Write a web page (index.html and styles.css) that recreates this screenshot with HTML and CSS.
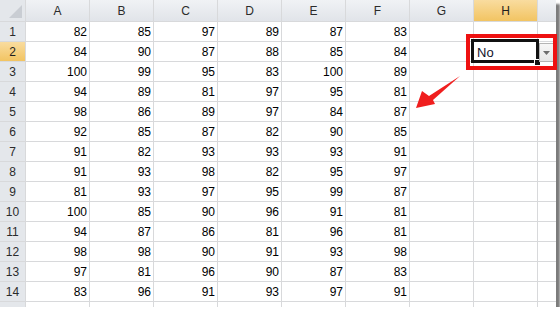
FILE: index.html
```html
<!DOCTYPE html>
<html lang="en">
<head>
    <meta charset="UTF-8">
    <title>Sheet1</title>
    <link rel="stylesheet" href="styles.css">
</head>
<body>
    <div class="wrap">
        <div class="sheet">
            <div class="corner"><svg width="25" height="21" viewBox="0 0 25 21"><polygon points="9,18 22,18 22,5" fill="#c9cdd3"/></svg></div>
            <div class="ch">A</div><div class="ch">B</div><div class="ch">C</div><div class="ch">D</div><div class="ch">E</div><div class="ch">F</div><div class="ch">G</div><div class="ch active">H</div><div class="ch"></div>

            <div class="rh">1</div><div class="c">82</div><div class="c">85</div><div class="c">97</div><div class="c">89</div><div class="c">87</div><div class="c">83</div><div class="c"></div><div class="c"></div><div class="c"></div>
            <div class="rh active">2</div><div class="c">84</div><div class="c">90</div><div class="c">87</div><div class="c">88</div><div class="c">85</div><div class="c">84</div><div class="c"></div><div class="c pick">No<span class="sel"></span><span class="handle"></span></div><div class="c"></div>
            <div class="rh">3</div><div class="c">100</div><div class="c">99</div><div class="c">95</div><div class="c">83</div><div class="c">100</div><div class="c">89</div><div class="c"></div><div class="c"></div><div class="c"></div>
            <div class="rh">4</div><div class="c">94</div><div class="c">89</div><div class="c">81</div><div class="c">97</div><div class="c">95</div><div class="c">81</div><div class="c"></div><div class="c"></div><div class="c"></div>
            <div class="rh">5</div><div class="c">98</div><div class="c">86</div><div class="c">89</div><div class="c">97</div><div class="c">84</div><div class="c">87</div><div class="c"></div><div class="c"></div><div class="c"></div>
            <div class="rh">6</div><div class="c">92</div><div class="c">85</div><div class="c">87</div><div class="c">82</div><div class="c">90</div><div class="c">85</div><div class="c"></div><div class="c"></div><div class="c"></div>
            <div class="rh">7</div><div class="c">91</div><div class="c">82</div><div class="c">93</div><div class="c">93</div><div class="c">93</div><div class="c">91</div><div class="c"></div><div class="c"></div><div class="c"></div>
            <div class="rh">8</div><div class="c">91</div><div class="c">93</div><div class="c">98</div><div class="c">82</div><div class="c">95</div><div class="c">97</div><div class="c"></div><div class="c"></div><div class="c"></div>
            <div class="rh">9</div><div class="c">81</div><div class="c">93</div><div class="c">97</div><div class="c">95</div><div class="c">99</div><div class="c">87</div><div class="c"></div><div class="c"></div><div class="c"></div>
            <div class="rh">10</div><div class="c">100</div><div class="c">85</div><div class="c">90</div><div class="c">96</div><div class="c">91</div><div class="c">81</div><div class="c"></div><div class="c"></div><div class="c"></div>
            <div class="rh">11</div><div class="c">94</div><div class="c">87</div><div class="c">86</div><div class="c">81</div><div class="c">96</div><div class="c">81</div><div class="c"></div><div class="c"></div><div class="c"></div>
            <div class="rh">12</div><div class="c">98</div><div class="c">98</div><div class="c">90</div><div class="c">91</div><div class="c">93</div><div class="c">98</div><div class="c"></div><div class="c"></div><div class="c"></div>
            <div class="rh">13</div><div class="c">97</div><div class="c">81</div><div class="c">96</div><div class="c">90</div><div class="c">87</div><div class="c">83</div><div class="c"></div><div class="c"></div><div class="c"></div>
            <div class="rh">14</div><div class="c">83</div><div class="c">96</div><div class="c">91</div><div class="c">93</div><div class="c">97</div><div class="c">91</div><div class="c"></div><div class="c"></div><div class="c"></div>
            <div class="rh"></div><div class="c"></div><div class="c"></div><div class="c"></div><div class="c"></div><div class="c"></div><div class="c"></div><div class="c"></div><div class="c"></div><div class="c"></div>
        </div>

        <!-- dropdown arrow of the validation list -->
        <div class="dropbtn"><svg width="7" height="4" viewBox="0 0 7 4"><polygon points="0,0 7,0 3.5,4" fill="#6d6d6d"/></svg></div>
        <div class="redbox"></div>
        <svg class="arrow" width="50" height="40" viewBox="0 0 50 40">
            <polygon points="0,33 6,16 13,21 44,1 17,25 19,29" fill="#f01e1e"/>
        </svg>
    </div>
</body>
</html>
```

FILE: styles.css
```css
body {
    margin: 0;
    background-color: #fff;
    font-family: "Liberation Sans", Arial, sans-serif;
}
.wrap {
    position: relative;
    width: 556px;
    height: 307px;
    box-shadow: 4px 4px 2px #7c7c7c;
}
.sheet {
    display: grid;
    grid-template-columns: 25px repeat(8, 63px) 18px;
    grid-template-rows: 21px repeat(14, 19px) 5px;
    gap: 1px;
    width: 556px;
    height: 307px;
    overflow: hidden;
    background-color: #d8d9db;
}
.corner {
    background-color: #e4e7eb;
}
.corner svg {
    display: block;
}
.ch {
    background: linear-gradient(#f0f2f5, #e1e4e9);
    color: #2b2b2b;
    font-size: 12px;
    text-align: center;
    line-height: 19px;
    padding-top: 2px;
}
.rh {
    background-color: #e4e7eb;
    color: #2b2b2b;
    font-size: 12px;
    text-align: center;
    line-height: 17px;
    padding-top: 2px;
}
.ch.active,
.rh.active {
    background: linear-gradient(#f9dc9f, #f2c462);
    color: #1e1e1e;
}
.c {
    background-color: #fff;
    color: #000;
    font-size: 12px;
    text-align: right;
    line-height: 17px;
    padding: 2px 2px 0 0;
}
.pick {
    position: relative;
    text-align: left;
    padding-left: 3px;
    font-size: 13px;
    color: #10122a;
    overflow: visible;
}
.sel {
    position: absolute;
    left: -3px;
    top: -3px;
    width: 62px;
    height: 18px;
    border: 3px solid #111;
}
.handle {
    position: absolute;
    right: -4px;
    bottom: -5px;
    width: 5px;
    height: 5px;
    background-color: #111;
    border: 1px solid #fff;
}
.dropbtn {
    position: absolute;
    left: 539px;
    top: 43px;
    width: 13px;
    height: 17px;
    background: linear-gradient(#f7f7f7, #e6e6e6);
    border: 1px solid #b5b5b5;
    display: flex;
    align-items: center;
    justify-content: center;
}
.redbox {
    position: absolute;
    left: 466px;
    top: 34px;
    width: 83px;
    height: 28px;
    border: 4px solid #ee1111;
}
.arrow {
    position: absolute;
    left: 416px;
    top: 75px;
}
```
